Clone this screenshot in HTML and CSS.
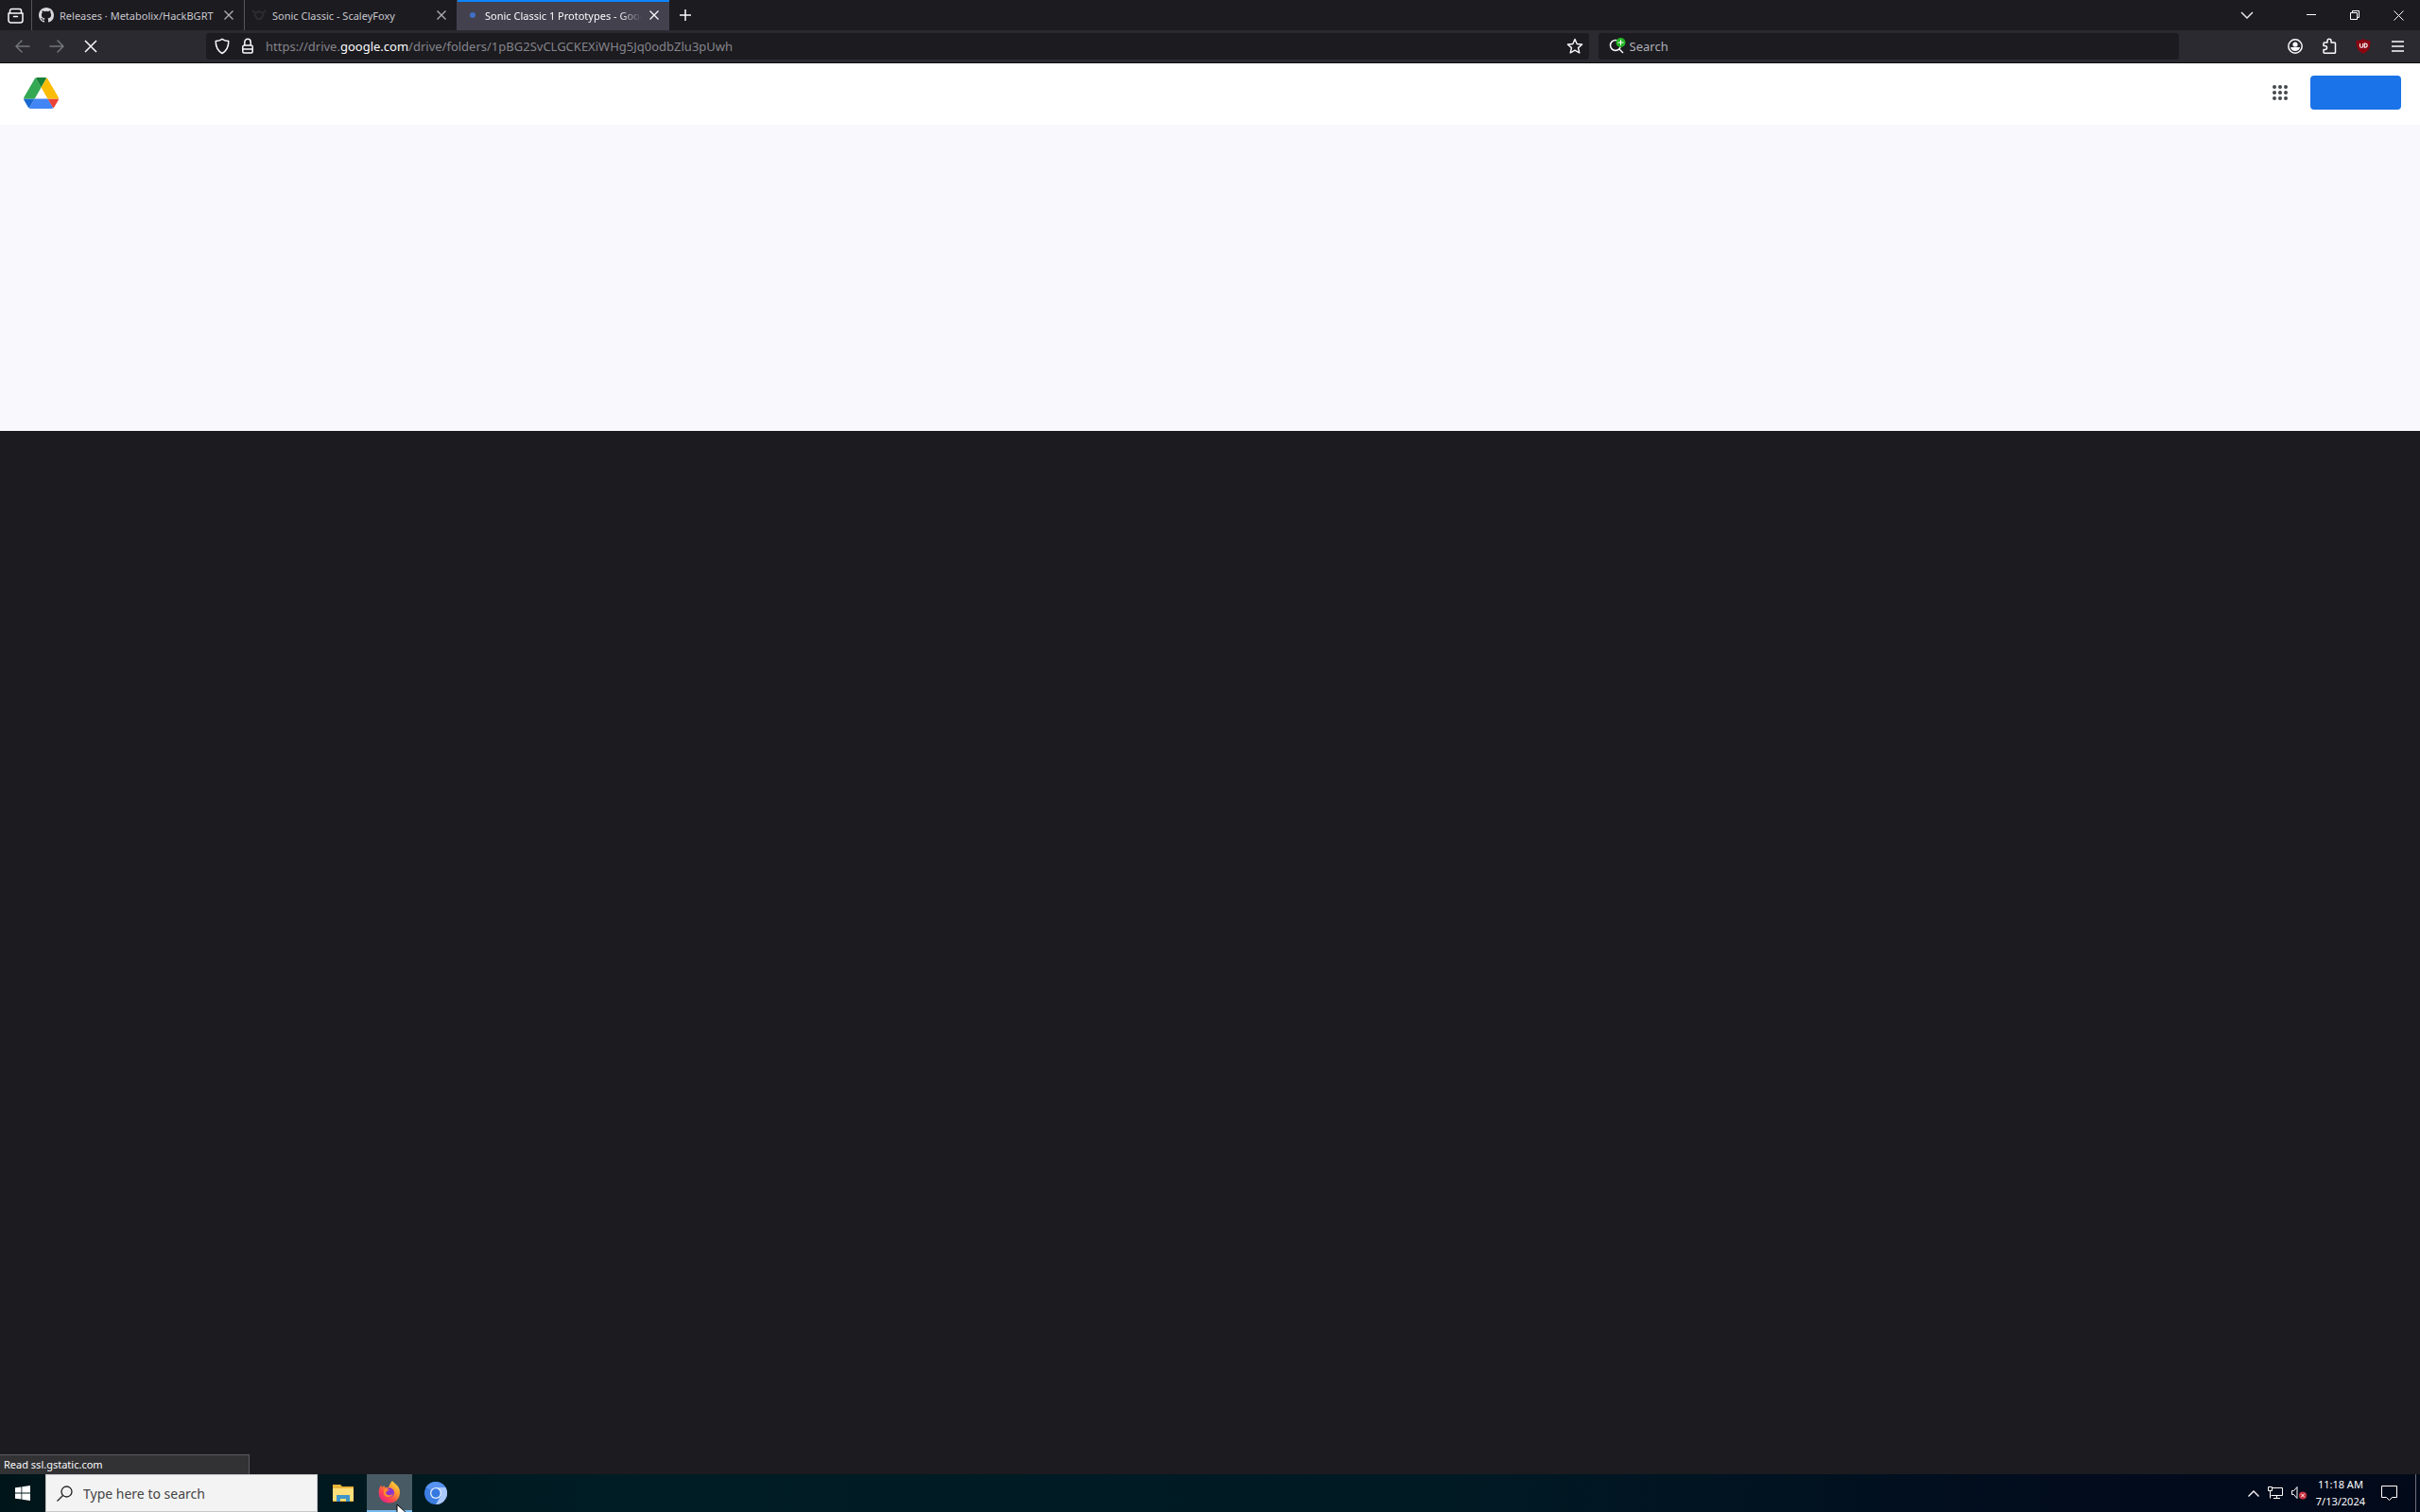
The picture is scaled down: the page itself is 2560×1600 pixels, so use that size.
FILE: index.html
```html
<!DOCTYPE html>
<html lang="en">
<head>
  <meta charset="UTF-8" />
  <meta name="viewport" content="width=device-width, initial-scale=1.0" />
  <title>Sonic Classic 1 Prototypes - Google Drive</title>
  <link rel="stylesheet" href="styles.css">
</head>
<body>
  <header class="tab-bar">
    <button class="icon-button view-button" aria-label="Firefox View">
      <svg width="17" height="17" viewBox="0 0 17 17" fill="none" stroke="#fbfbfe" stroke-width="1.5" stroke-linecap="round" stroke-linejoin="round"><path d="M2.500 5.500V3.500a2 2 0 0 1 2-2h8a2 2 0 0 1 2 2v2M1 6h15v7.500a2.500 2.500 0 0 1-2.500 2.500h-10A2.500 2.500 0 0 1 1 13.500zM6.500 9.500h4"/></svg>
    </button>
    <div class="tab">
      <svg class="favicon" viewBox="0 0 16 16" fill="#d8d8de"><path d="M8 0C3.58 0 0 3.58 0 8c0 3.54 2.29 6.53 5.47 7.59.4.07.55-.17.55-.38v-1.49c-2.01.37-2.53-.49-2.69-.94-.09-.23-.48-.94-.82-1.13-.28-.15-.68-.52-.01-.53.63-.01 1.08.58 1.23.82.72 1.21 1.87.87 2.33.66.07-.52.28-.87.51-1.07-1.78-.2-3.64-.89-3.64-3.95 0-.87.31-1.59.82-2.15-.08-.2-.36-1.02.08-2.12 0 0 .67-.21 2.2.82a7.5 7.5 0 0 1 4 0c1.53-1.04 2.2-.82 2.2-.82.44 1.1.16 1.92.08 2.12.51.56.82 1.27.82 2.15 0 3.07-1.87 3.75-3.65 3.95.29.25.54.73.54 1.48v2.2c0 .21.15.46.55.38A8 8 0 0 0 16 8c0-4.42-3.58-8-8-8z"/></svg>
      <span class="tab-title">Releases · Metabolix/HackBGRT</span>
      <button class="icon-button tab-close" aria-label="Close tab"><svg width="10" height="10" viewBox="0 0 10 10" stroke="#b0b0b8" stroke-width="1.3"><path d="M.5.5l9 9M9.5.5l-9 9"/></svg></button>
    </div>
    <div class="tab">
      <svg class="favicon" viewBox="0 0 16 16" fill="none" stroke="#2c2c31" stroke-width="2"><path d="M1 3l3 3 4-2 4 2 3-3M3 7l3 5h4l3-5"/></svg>
      <span class="tab-title">Sonic Classic - ScaleyFoxy</span>
      <button class="icon-button tab-close" aria-label="Close tab"><svg width="10" height="10" viewBox="0 0 10 10" stroke="#b0b0b8" stroke-width="1.3"><path d="M.5.5l9 9M9.5.5l-9 9"/></svg></button>
    </div>
    <div class="tab tab-active">
      <svg class="favicon" viewBox="0 0 16 16"><circle cx="9" cy="8" r="3" fill="#3f6fc4"/></svg>
      <span class="tab-title">Sonic Classic 1 Prototypes - Google Drive</span>
      <button class="icon-button tab-close" aria-label="Close tab"><svg width="10" height="10" viewBox="0 0 10 10" stroke="#fbfbfe" stroke-width="1.3"><path d="M.5.5l9 9M9.5.5l-9 9"/></svg></button>
    </div>
    <button class="icon-button new-tab" aria-label="New tab"><svg width="12" height="12" viewBox="0 0 12 12" stroke="#fbfbfe" stroke-width="1.5"><path d="M6 0v12M0 6h12"/></svg></button>
    <div class="window-buttons">
      <button class="icon-button" aria-label="List all tabs"><svg width="14" height="8" viewBox="0 0 14 8" fill="none" stroke="#e4e4ea" stroke-width="1.5"><path d="M1 1l6 6 6-6"/></svg></button>
      <button class="icon-button" aria-label="Minimize"><svg width="10" height="10" viewBox="0 0 10 10" stroke="#fff"><path d="M0 4.5h10"/></svg></button>
      <button class="icon-button" aria-label="Restore"><svg width="10" height="10" viewBox="0 0 10 10" fill="none" stroke="#fff"><path d="M.5 2.5h7v7h-7zM2.5 2.500v-2h7v7h-2"/></svg></button>
      <button class="icon-button" aria-label="Close"><svg width="11" height="11" viewBox="0 0 11 11" stroke="#fff"><path d="M.5.5l10 10M10.5.5l-10 10"/></svg></button>
    </div>
  </header>

  <nav class="toolbar">
    <div class="nav-buttons">
      <button class="icon-button" aria-label="Back"><svg width="16" height="14" viewBox="0 0 16 14" fill="none" stroke="#74747b" stroke-width="1.5" stroke-linecap="round"><path d="M7 1L1 7l6 6M1 7h14"/></svg></button>
      <button class="icon-button" aria-label="Forward"><svg width="16" height="14" viewBox="0 0 16 14" fill="none" stroke="#74747b" stroke-width="1.5" stroke-linecap="round"><path d="M9 1l6 6-6 6M15 7H1"/></svg></button>
      <button class="icon-button" aria-label="Stop"><svg width="14" height="14" viewBox="0 0 14 14" stroke="#fbfbfe" stroke-width="1.5"><path d="M1 1l12 12M13 1L1 13"/></svg></button>
    </div>
    <div class="url-bar">
      <svg width="16" height="18" viewBox="0 0 16 18" fill="none" stroke="#fbfbfe" stroke-width="1.5" stroke-linejoin="round"><path d="M8 1.300c2 1.400 4.300 2 6.800 2.200.1 5.600-1.800 10-6.800 13-5-3-6.900-7.400-6.800-13C3.700 3.300 6 2.700 8 1.300z"/></svg>
      <svg width="12" height="18" viewBox="0 0 12 18" fill="none" stroke="#fbfbfe" stroke-width="1.5"><path d="M2.800 8V4.500a3.200 3.200 0 0 1 6.400 0V8M2.300 8h7.400a1.500 1.500 0 0 1 1.500 1.500v5a1.500 1.500 0 0 1-1.500 1.500H2.300a1.500 1.500 0 0 1-1.500-1.500v-5A1.500 1.500 0 0 1 2.300 8zM1 12h10"/></svg>
      <span class="url">https://drive.<b>google.com</b>/drive/folders/1pBG2SvCLGCKEXiWHg5Jq0odbZlu3pUwh</span>
      <button class="icon-button" aria-label="Bookmark this page"><svg width="18" height="18" viewBox="0 0 18 18" fill="none" stroke="#fbfbfe" stroke-width="1.4" stroke-linejoin="round"><path d="M9 1.500l2.200 5 5.400.5-4.100 3.600 1.300 5.400L9 13.200 4.200 16l1.300-5.400L1.400 7l5.400-.5z"/></svg></button>
    </div>
    <div class="search-bar">
      <svg width="18" height="18" viewBox="0 0 18 18" fill="none"><circle cx="7" cy="8" r="5.500" stroke="#fbfbfe" stroke-width="1.5"/><path d="M11 12l4 4" stroke="#fbfbfe" stroke-width="1.5"/><circle cx="12.500" cy="5" r="5" fill="#22b524"/><path d="M12.500 2v6M9.500 5h6" stroke="#fff"/></svg>
      <input class="search-input" type="text" placeholder="Search" aria-label="Search">
    </div>
    <div class="toolbar-buttons">
      <button class="icon-button" aria-label="Account"><svg width="16" height="16" viewBox="0 0 16 16"><circle cx="8" cy="8" r="7.200" fill="none" stroke="#fbfbfe" stroke-width="1.5"/><circle cx="8" cy="6" r="2.600" fill="#fbfbfe"/><path d="M3 9h10c-.5 2.500-2.500 4-5 4s-4.500-1.500-5-4z" fill="#fbfbfe"/></svg></button>
      <button class="icon-button" aria-label="Extensions"><svg width="16" height="18" viewBox="0 0 16 18" fill="none" stroke="#fbfbfe" stroke-width="1.5" stroke-linejoin="round"><path d="M6 5V3.300a2 2 0 0 1 4 0V5h3.500a1 1 0 0 1 1 1v9.200a1 1 0 0 1-1 1H3a1 1 0 0 1-1-1v-2.700h1.500a2 2 0 0 0 0-4H2V6a1 1 0 0 1 1-1z"/></svg></button>
      <button class="icon-button" aria-label="uBlock Origin"><svg width="16" height="16" viewBox="0 0 16 16"><path d="M8 0c2 1.500 4.500 2 7.500 2 0 7-1.500 11-7.500 14C2 13 .5 9 .5 2 3.500 2 6 1.500 8 0z" fill="#8c0612"/><path d="M4.500 5v2.700a1.600 1.600 0 0 0 3.200 0V5M9.300 5v4.300h.7A2.100 2.100 0 0 0 10 5z" fill="none" stroke="#fff" stroke-width="1.100"/></svg></button>
      <button class="icon-button" aria-label="Open application menu"><svg width="13" height="12" viewBox="0 0 13 12" stroke="#fbfbfe" stroke-width="1.5"><path d="M0 1h13M0 6h13M0 11h13"/></svg></button>
    </div>
  </nav>

  <main class="page">
    <div class="drive-header">
      <a class="drive-logo" href="#" aria-label="Google Drive"><svg width="37" height="33" viewBox="0 0 87 78"><path d="M6.600 66.850l3.850 6.650c.8 1.400 1.950 2.500 3.300 3.300l13.750-23.800H0c0 1.550.4 3.100 1.200 4.500z" fill="#1967d2"/><path d="M43.650 25L29.900 1.200c-1.350.8-2.500 1.900-3.300 3.300l-25.400 44A9 9 0 0 0 0 53h27.500z" fill="#34a853"/><path d="M73.550 76.800c1.350-.8 2.500-1.900 3.300-3.300l9.250-16c.8-1.400 1.200-2.950 1.200-4.500H59.800l5.850 11.500z" fill="#ea4335"/><path d="M43.650 25L57.400 1.200C56.050.4 54.500 0 52.900 0H34.400c-1.600 0-3.150.45-4.500 1.200z" fill="#188038"/><path d="M59.800 53H27.500L13.750 76.800c1.350.8 2.900 1.200 4.500 1.200h50.800c1.600 0 3.150-.45 4.500-1.200z" fill="#4285f4"/><path d="M73.400 26.500L60.700 4.500c-.8-1.400-1.950-2.500-3.300-3.300L43.650 25 59.800 53h27.450c0-1.550-.4-3.100-1.200-4.500z" fill="#fbbc04"/></svg></a>
      <button class="icon-button apps-button" aria-label="Google apps"><svg width="16" height="16" viewBox="0 0 16 16" fill="#45484c"><circle cx="2" cy="2" r="2"/><circle cx="8" cy="2" r="2"/><circle cx="14" cy="2" r="2"/><circle cx="2" cy="8" r="2"/><circle cx="8" cy="8" r="2"/><circle cx="14" cy="8" r="2"/><circle cx="2" cy="14" r="2"/><circle cx="8" cy="14" r="2"/><circle cx="14" cy="14" r="2"/></svg></button>
      <button class="sign-in" aria-label="Sign in"></button>
    </div>
    <div class="drive-body"></div>
    <div class="status-panel">Read ssl.gstatic.com</div>
  </main>

  <footer class="taskbar">
    <button class="task start" aria-label="Start"><svg width="16" height="16" viewBox="0 0 16 16" fill="#fff"><path d="M0 2.300l6.500-.9v6.200H0zM7.300 1.300L16 0v7.600H7.300zM0 8.400h6.500v6.200L0 13.700zM7.300 8.400H16V16l-8.700-1.300z"/></svg></button>
    <label class="task-search">
      <svg width="17" height="17" viewBox="0 0 17 17" fill="none" stroke="#222" stroke-width="1.3"><circle cx="10.500" cy="6.500" r="5.500"/><path d="M6.500 10.500l-6 6"/></svg>
      <input type="text" placeholder="Type here to search" aria-label="Type here to search">
    </label>
    <button class="task" aria-label="File Explorer"><svg width="22" height="18" viewBox="0 0 22 18"><path d="M0 0h8l2 2h12v16H0z" fill="#e9b53c"/><path d="M0 4h22v13H0z" fill="#ffe07a"/><path d="M4 18v-7h14v7h-4v-3H8v3z" fill="#3f96c9"/></svg></button>
    <button class="task task-active" aria-label="Firefox">
      <svg width="24" height="24" viewBox="0 0 24 24"><defs><linearGradient id="fox" x1="1" y1="0" x2=".2" y2="1"><stop offset="0" stop-color="#fff04a"/><stop offset=".4" stop-color="#ff9a2e"/><stop offset=".7" stop-color="#ff4a4a"/><stop offset="1" stop-color="#e0208c"/></linearGradient></defs><path d="M15 0c1 2 6 4 7.500 9 2 8-3 14.500-10.500 14.500S0 18 .7 11C1 8 2 6 3.300 4.500L4 7l2.500-2 .5 2h4c1-3 2-5 4-7z" fill="url(#fox)"/><circle cx="12" cy="12.500" r="5" fill="#8a35cf"/><path d="M6 9c2-1 4-1 6 1-2 0-3 1-4 3 2 3 6 3 8 0-1 5-8 6-10 1z" fill="#ff8a2a"/></svg>
      <svg class="cursor" width="14" height="20" viewBox="0 0 14 20"><path d="M1 1v16l4-4 2 6 3-1-2-6h5z" fill="#fff" stroke="#000"/></svg>
    </button>
    <button class="task" aria-label="Chromium"><svg width="24" height="24" viewBox="0 0 24 24"><circle cx="12" cy="12" r="12" fill="#3b7de0"/><path d="M12 6h10.400A12 12 0 0 1 12 24l5.200-9z" fill="#a9c8fb"/><path d="M1.600 6A12 12 0 0 1 22.400 6H12a6 6 0 0 0-5.200 3z" fill="#5793ef"/><circle cx="12" cy="12" r="6" fill="#e4efff"/><circle cx="12" cy="12" r="4.700" fill="#3578df"/></svg></button>
    <div class="tray">
      <svg width="12" height="7" viewBox="0 0 12 7" fill="none" stroke="#fff" stroke-width="1.3"><path d="M.5 6.500L6 1l5.500 5.500"/></svg>
      <svg width="16" height="14" viewBox="0 0 16 14" fill="none" stroke="#fff"><path d="M5 1.500h10.500v8H3.500M9.500 9.500v3M6 12.500h7M.5.5h4v4h-4zM2.500 4.500v8"/></svg>
      <svg width="17" height="14" viewBox="0 0 17 14" fill="none" stroke="#fff"><path d="M.5 4.500h2L6 .5v12l-3.500-4h-2z"/><circle cx="12" cy="9.500" r="4" fill="#c9303e" stroke="none"/><path d="M10.200 7.700l3.600 3.600M13.800 7.700l-3.600 3.600"/></svg>
      <div class="clock"><span>11:18 AM</span><span>7/13/2024</span></div>
      <svg width="17" height="17" viewBox="0 0 17 17" fill="none" stroke="#fff"><path d="M.5.5h16v12h-5l-3 3-3-3h-5z"/></svg>
    </div>
    <button class="show-desktop" aria-label="Show desktop"></button>
  </footer>
</body>
</html>
```
FILE: styles.css
```css
* {
  box-sizing: border-box;
}
body {
  margin: 0;
  height: 100vh;
  display: flex;
  flex-direction: column;
  overflow: hidden;
  background: #1c1b20;
  color: #fbfbfe;
  font-family: "Noto Sans", "Open Sans", sans-serif;
  font-size: 11px;
}
svg {
  display: block;
  flex: none;
}
button {
  border: none;
  padding: 0;
  background: none;
  cursor: pointer;
}
.icon-button {
  display: flex;
  align-items: center;
  justify-content: center;
  flex: none;
}

/* Tabs */
.tab-bar {
  display: flex;
  height: 32px;
  background: #1c1b20;
}
.view-button {
  width: 33px;
}
.tab {
  display: flex;
  align-items: center;
  width: 225px;
  padding: 0 11px 0 7px;
  border-left: 1px solid #55555c;
  color: #c8c8ce;
}
.tab-active {
  background: #42414d;
  border-left-color: #42414d;
  box-shadow: inset 0 2px #0a84ff;
  color: #fbfbfe;
}
.favicon {
  width: 16px;
  height: 16px;
  margin-right: 6px;
}
.tab-title {
  flex: 1;
  overflow: hidden;
  white-space: nowrap;
  margin-right: 8px;
}
.tab-active .tab-title {
  -webkit-mask-image: linear-gradient(to left, transparent, #000 24px);
  mask-image: linear-gradient(to left, transparent, #000 24px);
}
.new-tab {
  width: 33px;
}
.window-buttons {
  display: flex;
  margin-left: auto;
}
.window-buttons .icon-button {
  width: 46px;
}
.window-buttons .icon-button:first-child {
  width: 90px;
}

/* Toolbar */
.toolbar {
  display: flex;
  align-items: center;
  height: 35px;
  background: #2b2a31;
  border-bottom: 1px solid #0c0c0d;
}
.nav-buttons {
  display: flex;
  width: 218px;
  padding-left: 6px;
}
.nav-buttons .icon-button {
  width: 36px;
  height: 28px;
}
.url-bar {
  display: flex;
  align-items: center;
  flex: 1;
  gap: 13px;
  height: 28px;
  padding: 0 6px 0 9px;
  background: #1c1b20;
  border-radius: 3px;
}
.url {
  flex: 1;
  color: #85858b;
  font-size: 13px;
}
.url b {
  color: #fbfbfe;
  font-weight: normal;
}
.search-bar {
  display: flex;
  align-items: center;
  gap: 4px;
  width: 24%;
  height: 28px;
  margin-left: 10px;
  padding: 0 11px;
  background: #1c1b20;
  border-radius: 3px;
}
input {
  flex: 1;
  min-width: 0;
  padding: 0;
  border: none;
  outline: none;
  background: none;
  font-family: inherit;
}
.search-input {
  color: #fbfbfe;
  font-size: 13px;
}
.search-input::placeholder {
  color: #b0b0b6;
}
.toolbar-buttons {
  display: flex;
  justify-content: flex-end;
  width: 255px;
  padding-right: 6px;
}
.toolbar-buttons .icon-button {
  width: 36px;
  height: 28px;
}

/* Page */
.page {
  position: relative;
  flex: 1;
}
.drive-header {
  display: flex;
  align-items: center;
  height: 65px;
  padding: 0 20px 3px 25px;
  background: #fff;
}
.apps-button {
  margin-left: auto;
}
.sign-in {
  width: 96px;
  height: 36px;
  margin-left: 24px;
  background: #1a73e8;
  border-radius: 4px;
}
.drive-body {
  height: 324px;
  background: #f8f8fd;
}
.status-panel {
  position: absolute;
  left: 0;
  bottom: 0;
  width: 264px;
  padding-left: 4px;
  background: #323234;
  border: 1px solid #5b5b60;
  border-width: 1px 1px 0 0;
  line-height: 20px;
}

/* Taskbar */
.taskbar {
  display: flex;
  gap: 1px;
  height: 40px;
  background: linear-gradient(to right, #001519, #001c24 25%, #001a24 60%, #020c1d 85%, #020a1a);
}
.task {
  position: relative;
  display: flex;
  align-items: center;
  justify-content: center;
  width: 48px;
}
.start {
  width: 47px;
}
.task-active {
  background: #485a64;
  border-bottom: 2px solid #76b9ed;
}
.cursor {
  position: absolute;
  left: 31px;
  top: 31px;
}
.task-search {
  display: flex;
  align-items: center;
  gap: 11px;
  width: 288px;
  margin-right: 2px;
  padding-left: 11px;
  background: #f3f3f3;
  border: 1px solid #c4c8ca;
}
.task-search input {
  font-size: 14px;
}
.task-search input::placeholder {
  color: #444;
}
.tray {
  display: flex;
  align-items: center;
  gap: 9px;
  margin-left: auto;
  padding-right: 18px;
}
.clock {
  display: flex;
  flex-direction: column;
  align-items: center;
  margin-right: 8px;
  line-height: 18px;
}
.show-desktop {
  width: 5px;
  border-left: 1px solid #6a6f78;
}
```
